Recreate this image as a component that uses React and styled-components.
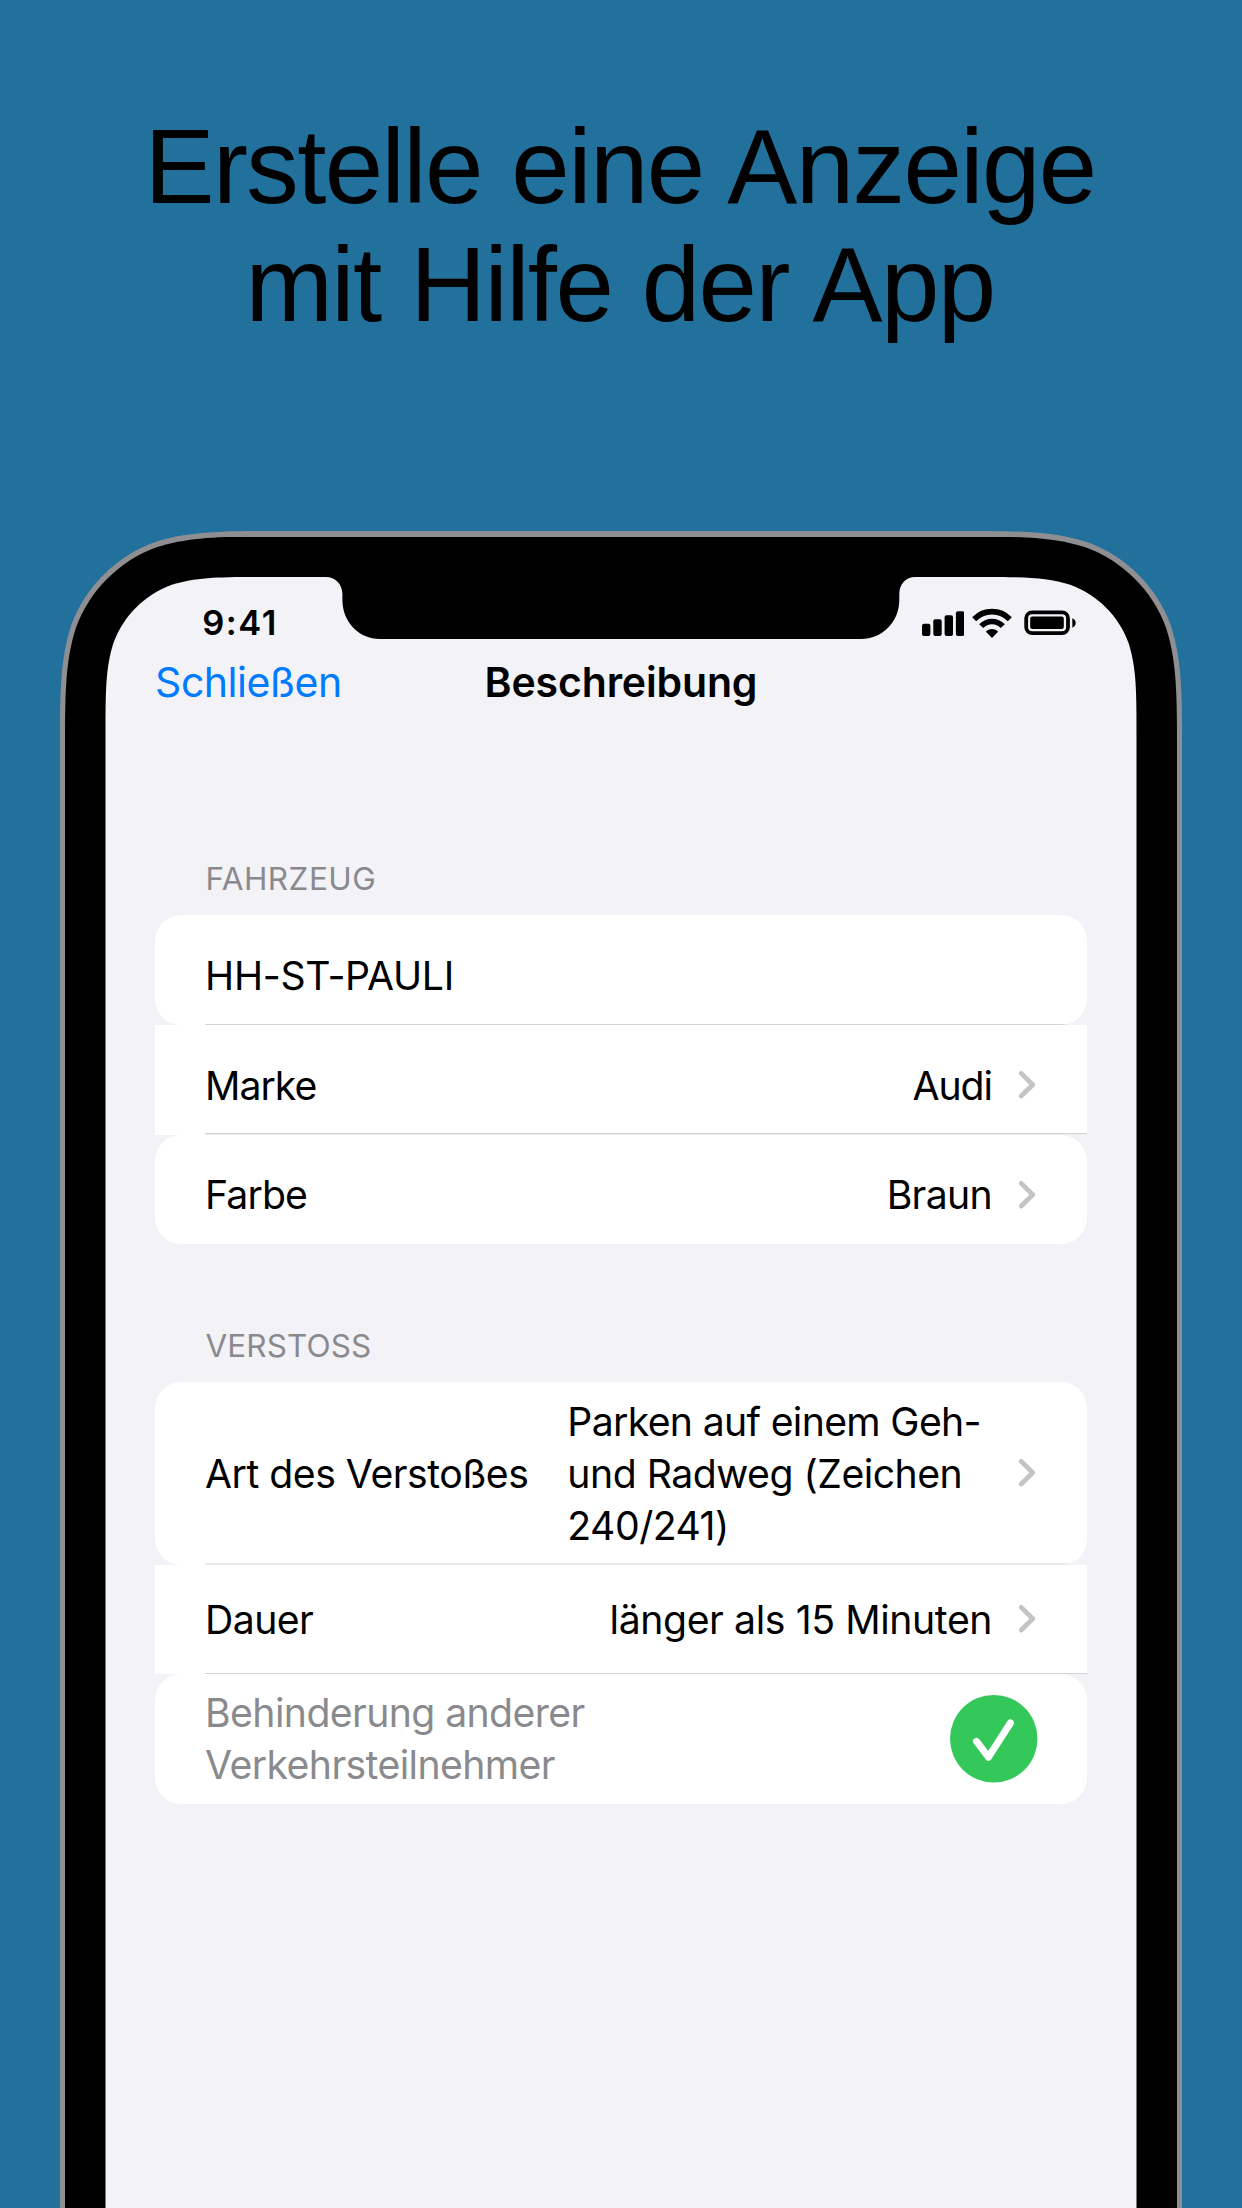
import React from "react";
import styled, { createGlobalStyle, css } from "styled-components";

/* Continuous ("squircle") top corners; the bottom edge is cut off straight. */
const corner = [
  [1.52866, 0, 1.08849, 0, 0.86841, 0, 0.63149, 0.07491],
  [0.37282, 0.16906, 0.16906, 0.37282, 0.07491, 0.63149],
  [0, 0.86841, 0, 1.08849, 0, 1.52866],
];

const smoothTop = (w, h, r) => {
  const left = (x, y) => `${(x * r).toFixed(2)} ${(y * r).toFixed(2)}`;
  const right = (x, y) => `${(w - x * r).toFixed(2)} ${(y * r).toFixed(2)}`;
  const [a, b, c] = corner;
  return `path("M0 ${h} L${left(c[4], c[5])} C${left(c[2], c[3])} ${left(c[0], c[1])} ${left(b[4], b[5])} C${left(
    b[2],
    b[3]
  )} ${left(b[0], b[1])} ${left(a[6], a[7])} C${left(a[4], a[5])} ${left(a[2], a[3])} ${left(a[0], a[1])} L${right(
    a[0],
    a[1]
  )} C${right(a[2], a[3])} ${right(a[4], a[5])} ${right(a[6], a[7])} C${right(b[0], b[1])} ${right(
    b[2],
    b[3]
  )} ${right(b[4], b[5])} C${right(c[0], c[1])} ${right(c[2], c[3])} ${right(c[4], c[5])} L${w} ${h} Z")`;
};

const GlobalStyle = createGlobalStyle`
  body { margin: 0; background: #22709c; }
  * { box-sizing: border-box; }
`;

const Page = styled.main`
  display: flex;
  flex-direction: column;
  align-items: center;
  width: 1242px;
  height: 2208px;
  overflow: hidden;
  background: #22709c;
  color: #000;
  font-family: Inter, "Noto Sans", sans-serif;
`;

const Headline = styled.h1`
  flex: none;
  width: 100%;
  height: 531px;
  margin: 0;
  padding: 107.6px 2px 0 0;
  font: 400 105px/118px "Liberation Sans", Arial, sans-serif;
  letter-spacing: -1.6px;
  word-spacing: 2px;
  text-align: center;
`;

const Frame = styled.div`
  flex: none;
  width: 1122.4px;
  height: 1677px;
  padding: 5.5px 5.2px 0;
  background: #8e8e93;
  clip-path: ${smoothTop(1122.4, 1677, 150)};
`;

const Bezel = styled.div`
  height: 100%;
  padding: 40.5px 40.5px 0;
  background: #000;
  clip-path: ${smoothTop(1112, 1672, 145)};
`;

const Screen = styled.div`
  position: relative;
  height: 100%;
  background: #f2f2f7;
  clip-path: ${smoothTop(1031, 1632, 105)};
`;

const Notch = styled.svg`
  position: absolute;
  top: -1px;
  left: 221px;
  width: 589px;
  height: 63px;
`;

const StatusBar = styled.div`
  display: flex;
  justify-content: space-between;
  height: 80.4px;
  padding: 31px 59.7px 0 96.8px;
`;

const Time = styled.div`
  font-size: 34.5px;
  font-weight: 600;
  line-height: 30px;
  letter-spacing: 1.5px;
`;

const Indicators = styled.div`
  display: flex;
  gap: 7.7px;
  height: 30px;

  svg { display: block; height: 30px; }
  svg:last-child { margin-left: 4.6px; }
`;

const NavBar = styled.header`
  display: grid;
  grid-template-columns: 1fr auto 1fr;
  height: 50px;
  padding: 0 49.6px;
  font-size: 41px;
  line-height: 50px;
`;

const CloseLink = styled.a`
  color: #007aff;
  letter-spacing: -0.5px;
`;

const Title = styled.span`
  font-weight: 600;
  letter-spacing: -0.15px;
`;

const Form = styled.div`
  display: flex;
  flex-direction: column;
  gap: 81px;
  padding: 151px 49.5px 0 49.3px;
`;

const GroupHeader = styled.h2`
  margin: 0;
  padding: 1px 0 15.7px 50.7px;
  color: #8a8a8e;
  font-size: 31.5px;
  font-weight: 400;
  line-height: 40px;
  letter-spacing: ${(p) => p.$tracking || 0}px;
`;

const lines = {
  thin: css`height: 1px; background: #d3d3d5;`,
  fading: css`height: 2px; background: linear-gradient(#d3d3d5 50%, #ececee 50%);`,
  soft: css`height: 2px; background: #e9e9eb;`,
};

const Row = styled.div`
  position: relative;
  display: flex;
  align-items: center;
  justify-content: space-between;
  height: ${(p) => p.$height}px;
  padding: ${(p) => p.$drop || 0}px 49.5px 0 50.3px;
  overflow: hidden;
  border-radius: ${(p) => (p.$rounded ? "26px" : "0")};
  background: #fff;
  font-size: 39.2px;
  line-height: 52.3px;

  ${(p) =>
    p.$line &&
    css`
      &::after {
        content: "";
        position: absolute;
        right: 0;
        bottom: 0;
        left: 50px;
        ${lines[p.$line]}
      }
    `}
`;

const Text = styled.span`
  display: block;
  color: ${(p) => (p.$muted ? "#8a8a8e" : "#000")};
  letter-spacing: ${(p) => p.$tracking || 0}px;
  white-space: nowrap;
`;

const Value = styled.div`
  display: flex;
  align-items: center;
  gap: 24.6px;
`;

const Lines = styled.div`
  width: ${(p) => (p.$width ? `${p.$width}px` : "auto")};
  padding-top: 1.4px;
`;

const ChevronIcon = styled.svg`
  flex: none;
  width: 20px;
  height: 30px;
  margin-right: 0.8px;
`;

const CheckBadge = styled.svg`
  flex: none;
  width: 87.5px;
  height: 87.5px;
`;

const Chevron = () => (
  <ChevronIcon viewBox="0 0 20 30" fill="none" stroke="#c4c4c7" strokeWidth="4.8" strokeLinecap="round" strokeLinejoin="round">
    <path d="M4.2 3.4 15.8 14.7 4.2 26" />
  </ChevronIcon>
);

const Signal = () => (
  <svg width="42.3" height="30" viewBox="0 0 42.3 30">
    <rect x="0" y="15.7" width="8.4" height="12.3" rx="2" />
    <rect x="11.3" y="11.2" width="8.4" height="16.8" rx="2" />
    <rect x="22.6" y="7.3" width="8.4" height="20.7" rx="2" />
    <rect x="33.9" y="3.3" width="8.4" height="24.7" rx="2" />
  </svg>
);

const Wifi = () => (
  <svg width="40" height="30" viewBox="0 0 40 30">
    <g fill="none" stroke="#000" strokeWidth="5.6">
      <path d="M2.2 11.2A24.7 24.7 0 0 1 37.8 11.2" />
      <path d="M9.2 18.2A14.8 14.8 0 0 1 30.8 18.2" />
    </g>
    <path d="M20 29.9 14.2 24Q14 23.6 14.4 23.1A8.3 8.3 0 0 1 25.6 23.1Q26 23.6 25.8 24Z" />
  </svg>
);

const Battery = () => (
  <svg width="53" height="30" viewBox="0 0 53 30">
    <rect x="2.2" y="4.3" width="41.8" height="20.9" rx="6" fill="none" stroke="#000" strokeWidth="3.8" />
    <rect x="6.2" y="8.6" width="33.6" height="12.4" rx="2" />
    <path d="M48.3 10.2C50.4 11 51.7 12.8 51.7 14.9S50.4 18.8 48.3 19.6Z" />
  </svg>
);

const Check = () => (
  <CheckBadge viewBox="0 0 87.5 87.5">
    <circle cx="43.75" cy="43.75" r="43.75" fill="#34c759" />
    <path d="M26.5 46.4 38.5 62.2 60.4 28" fill="none" stroke="#fff" strokeWidth="7" strokeLinecap="round" strokeLinejoin="round" />
  </CheckBadge>
);

function Field({ label, tracking, values, width, ...row }) {
  return (
    <Row {...row}>
      <Lines>
        <Text $tracking={tracking}>{label}</Text>
      </Lines>
      {values && (
        <Value>
          <Lines $width={width}>
            {values.map(([text, spacing]) => (
              <Text key={text} $tracking={spacing}>{text}</Text>
            ))}
          </Lines>
          <Chevron />
        </Value>
      )}
    </Row>
  );
}

export default function App() {
  return (
    <Page>
      <GlobalStyle />
      <Headline>
        Erstelle eine Anzeige
        <br />
        mit Hilfe der App
      </Headline>
      <Frame>
        <Bezel>
          <Screen>
            <Notch viewBox="0 -1 589 63">
              <path d="M0 -1V0C9 0 16.4 7 16.4 17V23C16.4 45 33 62 54 62H535C556 62 573.3 45 573.3 23V17C573.3 7 580 0 589 0V-1Z" />
            </Notch>
            <StatusBar>
              <Time>9:41</Time>
              <Indicators>
                <Signal />
                <Wifi />
                <Battery />
              </Indicators>
            </StatusBar>
            <NavBar>
              <CloseLink>Schließen</CloseLink>
              <Title>Beschreibung</Title>
            </NavBar>
            <Form>
              <section>
                <GroupHeader $tracking={0.5}>FAHRZEUG</GroupHeader>
                <Field label="HH-ST-PAULI" tracking={-0.3} $height={110} $drop={10} $rounded $line="thin" />
                <Field label="Marke" tracking={-1} values={[["Audi", -1]]} $height={110} $drop={10} $line="fading" />
                <Field label="Farbe" tracking={-0.9} values={[["Braun", -0.65]]} $height={109} $drop={10} $rounded />
              </section>
              <section>
                <GroupHeader $tracking={0.1}>VERSTOSS</GroupHeader>
                <Field
                  label="Art des Verstoßes"
                  tracking={-0.5}
                  values={[
                    ["Parken auf einem Geh-", -0.67],
                    ["und Radweg (Zeichen", -0.5],
                    ["240/241)", -0.5],
                  ]}
                  width={424.8}
                  $height={183}
                  $rounded
                  $line="soft"
                />
                <Field label="Dauer" tracking={-0.6} values={[["länger als 15 Minuten", -0.4]]} $height={109} $line="thin" />
                <Row $height={130} $rounded>
                  <Lines>
                    <Text $muted $tracking={-0.6}>Behinderung anderer</Text>
                    <Text $muted $tracking={-0.6}>Verkehrsteilnehmer</Text>
                  </Lines>
                  <Check />
                </Row>
              </section>
            </Form>
          </Screen>
        </Bezel>
      </Frame>
    </Page>
  );
}
